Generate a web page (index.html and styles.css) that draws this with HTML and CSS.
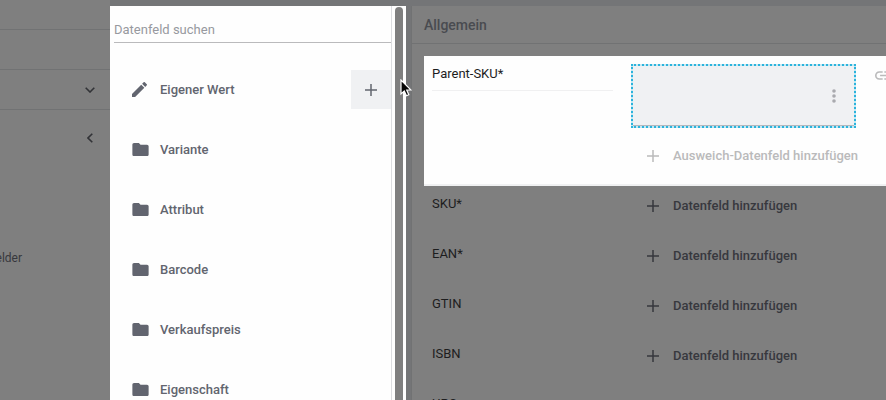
FILE: index.html
```html
<!DOCTYPE html>
<html lang="de">
<head>
<meta charset="utf-8">
<title>Datenfelder</title>
<link rel="stylesheet" href="styles.css">
</head>
<body>
<svg class="defs" width="0" height="0">
  <symbol id="plus" viewBox="0 0 12 12"><path d="M6 0v12M0 6h12" fill="none" stroke="currentColor" stroke-width="1.5"/></symbol>
  <symbol id="folder" viewBox="2 4 20 16"><path d="M10 4H4c-1.100 0-2 .9-2 2v12c0 1.100.9 2 2 2h16c1.100 0 2-.9 2-2V8c0-1.100-.9-2-2-2h-8z" fill="currentColor"/></symbol>
</svg>
<div class="app">
  <aside class="side">
    <div class="side-top"></div>
    <div class="side-row"></div>
    <div class="side-row side-select"><svg class="chev-down" viewBox="0 0 10 6"><path d="M.7.7 5 5 9.300.7"/></svg></div>
    <div class="side-back"><svg class="chev-left" viewBox="0 0 6 10"><path d="M5.300.7 1 5l4.300 4.300"/></svg></div>
    <div class="side-item"><span>elder</span></div>
  </aside>
  <section class="picker">
    <div class="list">
      <div class="search">Datenfeld suchen</div>
      <div class="item first"><svg class="pencil" viewBox="3 3 18 18"><path d="M3 17.250V21h3.750L17.810 9.940l-3.750-3.750zM20.710 7.040a1 1 0 0 0 0-1.410l-2.340-2.340a1 1 0 0 0-1.410 0l-1.830 1.830 3.750 3.750z" fill="currentColor"/></svg><span>Eigener Wert</span><button class="add"><svg class="plus"><use href="#plus"/></svg></button></div>
      <div class="item"><svg class="folder"><use href="#folder"/></svg><span>Variante</span></div>
      <div class="item"><svg class="folder"><use href="#folder"/></svg><span>Attribut</span></div>
      <div class="item"><svg class="folder"><use href="#folder"/></svg><span>Barcode</span></div>
      <div class="item"><svg class="folder"><use href="#folder"/></svg><span>Verkaufspreis</span></div>
      <div class="item"><svg class="folder"><use href="#folder"/></svg><span>Eigenschaft</span></div>
    </div>
    <div class="track"><div class="thumb"></div></div>
  </section>
  <main class="fields">
    <h2>Allgemein</h2>
    <div class="parent">
      <div class="parent-label">Parent-SKU*</div>
      <div class="parent-value">
        <div class="drop"><svg class="dots" viewBox="0 0 4 14"><circle cx="2" cy="2" r="1.800"/><circle cx="2" cy="7" r="1.800"/><circle cx="2" cy="12" r="1.800"/></svg></div>
        <div class="alt"><svg class="plus"><use href="#plus"/></svg><span>Ausweich-Datenfeld hinzufügen</span></div>
      </div>
      <svg class="link" viewBox="2 7 20 10"><path d="M3.900 12c0-1.710 1.390-3.100 3.100-3.100h4V7H7a5 5 0 0 0 0 10h4v-1.900H7A3.100 3.100 0 0 1 3.900 12zM8 13h8v-2H8zm9-6h-4v1.900h4a3.100 3.100 0 0 1 0 6.200h-4V17h4a5 5 0 0 0 0-10z"/></svg>
    </div>
    <div class="row"><span class="label">SKU*</span><svg class="plus"><use href="#plus"/></svg><span class="action">Datenfeld hinzufügen</span></div>
    <div class="row"><span class="label">EAN*</span><svg class="plus"><use href="#plus"/></svg><span class="action">Datenfeld hinzufügen</span></div>
    <div class="row"><span class="label">GTIN</span><svg class="plus"><use href="#plus"/></svg><span class="action">Datenfeld hinzufügen</span></div>
    <div class="row"><span class="label">ISBN</span><svg class="plus"><use href="#plus"/></svg><span class="action">Datenfeld hinzufügen</span></div>
    <div class="row"><span class="label">UPC</span></div>
  </main>
</div>
<svg class="cursor" viewBox="0 0 12 18"><path d="M1 1v14l3.300-3 2.200 4.800 2.300-1L6.700 11H11z"/></svg>
</body>
</html>
```
FILE: styles.css
```css
* { box-sizing: border-box; }
body { margin: 0; width: 886px; height: 400px; overflow: hidden; background: #747577; font: 400 13px/20px Roboto, sans-serif; color: #1d1d1e; }
.defs { position: absolute; }
svg { display: block; flex: none; }
.app { display: flex; height: 400px; overflow: hidden; }
.side { width: 110px; flex: none; background: #7f7f7f; color: #37383d; }
.side-top { height: 30px; border-bottom: 1px solid #717273; }
.side-row { height: 40px; border-bottom: 1px solid #717273; }
.side-select { display: flex; align-items: center; justify-content: flex-end; padding: 1px 15px 0 0; }
.chev-down, .chev-left { fill: none; stroke: #323337; stroke-width: 1.600; }
.chev-down { width: 10px; height: 6px; }
.chev-left { width: 6px; height: 10px; }
.side-back { height: 56px; display: flex; align-items: center; justify-content: flex-end; padding-right: 17px; }
.side-item { width: 22px; margin-top: 82px; display: flex; justify-content: flex-end; font-size: 12px; }
.picker { width: 296px; margin-top: 6px; flex: none; display: flex; background: #fefefe; }
.list { width: 282px; border-right: 1px solid #dcdde0; color: #62656f; overflow: hidden; }
.search { margin-left: 4px; height: 37px; padding-top: 14px; border-bottom: 1px solid #bababc; color: #97999f; }
.item { height: 60px; padding-left: 22px; display: flex; align-items: center; font-weight: 500; }
.item.first { margin-top: 17px; }
.item span { margin-left: 11px; }
.folder { width: 17px; height: 13px; margin-top: -1px; }
.pencil { width: 15px; height: 15px; margin-right: 2px; margin-top: -1px; }
.plus { width: 12px; height: 12px; }
.add { width: 40px; height: 39px; margin: -2px 0 0 auto; border: 0; padding: 1px 0 0; background: #f0f1f3; color: #62656f; display: grid; place-items: center; }
.track { width: 14px; padding: 1px 3px 0; }
.thumb { width: 8px; height: 410px; border-radius: 4px; background: #7f7f7f; }
.fields { width: 475px; margin: 6px 0 0 5px; flex: none; background: #7f7f7f; border-left: 1px solid #717273; overflow: hidden; }
.fields h2 { margin: 0; height: 38px; padding: 9px 0 0 12px; border-bottom: 1px solid #717273; font-size: 14px; line-height: 20px; font-weight: 500; color: #494b50; }
.parent { margin: 12px 0 0 12px; height: 130px; padding-left: 8px; display: flex; background: #fefefe; border-bottom: 2px solid #f0f1f2; }
.parent-label { width: 181px; height: 35px; padding-top: 8px; border-bottom: 1px solid #f0f0f1; flex: none; }
.parent-value { width: 262px; padding: 8px 0 0 18px; flex: none; }
.drop { width: 225px; height: 64px; border: 2px dotted #2cb3dc; background: linear-gradient(#f0f1f3, #f0f1f3) padding-box, #c5e8f3; box-shadow: inset 0 -1px #b5b8bd; display: flex; align-items: center; justify-content: flex-end; padding-right: 18px; }
.dots { width: 4px; height: 14px; fill: #a9aaae; }
.alt { height: 56px; padding-left: 16px; display: flex; align-items: center; color: #bababb; font-weight: 500; white-space: nowrap; }
.alt span, .action { margin-left: 14px; }
.link { width: 17px; height: 9px; margin-top: 15px; fill: #bababb; }
.row { height: 50px; padding-left: 20px; display: flex; }
.label { width: 215px; padding-top: 8px; flex: none; }
.row .plus { margin-top: 14px; color: #37383e; }
.action { padding-top: 10px; font-weight: 500; color: #37383e; }
.cursor { position: absolute; left: 400px; top: 79px; width: 12px; height: 18px; fill: #050505; stroke: #fff; stroke-width: 1.200; }
```
